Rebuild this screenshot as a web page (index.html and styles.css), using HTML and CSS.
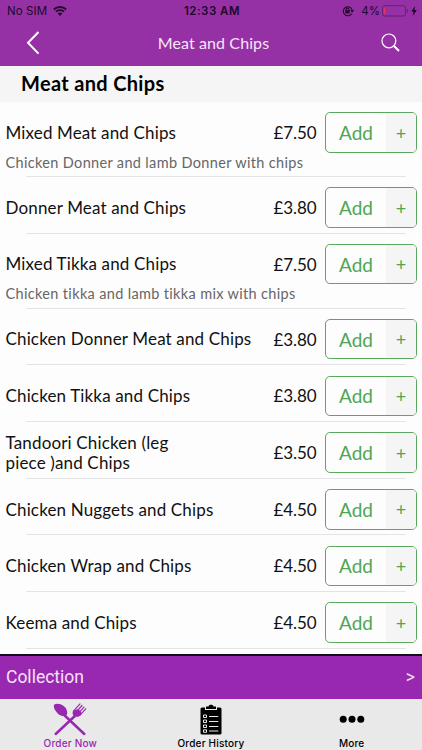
FILE: index.html
```html
<!DOCTYPE html>
<html lang="en">
<head>
  <meta charset="utf-8">
  <meta name="viewport" content="width=device-width, initial-scale=1">
  <title>Meat and Chips</title>
  <link rel="stylesheet" href="styles.css">
</head>

<body>
  <div class="app">
    <header class="header">
      <div class="status-bar">
        <div class="carrier">
          <span>No SIM</span>
          <svg class="wifi" viewBox="0 0 14 10">
            <path d="M0.8 3.5 A9 9 0 0 1 13.2 3.5" />
            <path d="M2.9 5.7 A6 6 0 0 1 11.1 5.7" />
            <path class="wifi-dot" d="M7 10 L4.7 7.6 A3.4 3.4 0 0 1 9.3 7.6 Z" />
          </svg>
        </div>
        <div class="clock">12:33 AM</div>
        <div class="battery-info">
          <svg class="lock" viewBox="0 0 12 12">
            <path d="M9.7 8.6 A4.5 4.5 0 1 1 10 4.5" />
            <path d="M4 5.4 V4.6 a1.5 1.5 0 0 1 3 0 V5.4" />
            <rect x="3.4" y="5.2" width="4.2" height="3.2" />
            <path class="lock-arrow" d="M8.3 5 H12 L10.1 7.8 Z" />
          </svg>
          <span>4%</span>
          <svg class="battery" viewBox="0 0 27 12">
            <rect x="0.6" y="0.7" width="23" height="10.3" rx="2.2" />
            <path class="battery-level" d="M2.5 2.5 V9.2" />
            <path d="M25.3 4.3 V7.4" />
          </svg>
          <svg class="bolt" viewBox="0 0 6 10">
            <path d="M4.2 0 L0.2 5.6 H2.6 L1.8 10 L5.8 4.1 H3.4 Z" />
          </svg>
        </div>
      </div>

      <div class="nav-bar">
        <svg class="back" viewBox="0 0 14 24"><path d="M12.5 1 L2 11.8 L12.5 22.6" /></svg>
        <div class="nav-title">Meat and Chips</div>
        <svg class="search" viewBox="0 0 20 20">
          <circle cx="7.9" cy="7.9" r="6.9" />
          <path d="M13 13 L18 18" />
        </svg>
      </div>
    </header>

    <h1 class="category">Meat and Chips</h1>

    <div class="menu">
      <div class="item item-tall">
        <div class="name">Mixed Meat and Chips</div>
        <div class="price">£7.50</div>
        <button class="add"><span class="add-text">Add</span><span class="plus">+</span></button>
        <p class="description">Chicken Donner and lamb Donner with chips</p>
      </div>
      <div class="item">
        <div class="name">Donner Meat and Chips</div>
        <div class="price">£3.80</div>
        <button class="add"><span class="add-text">Add</span><span class="plus">+</span></button>
      </div>
      <div class="item item-tall">
        <div class="name">Mixed Tikka and Chips</div>
        <div class="price">£7.50</div>
        <button class="add"><span class="add-text">Add</span><span class="plus">+</span></button>
        <p class="description">Chicken tikka and lamb tikka mix with chips</p>
      </div>
      <div class="item">
        <div class="name">Chicken Donner Meat and Chips</div>
        <div class="price">£3.80</div>
        <button class="add"><span class="add-text">Add</span><span class="plus">+</span></button>
      </div>
      <div class="item">
        <div class="name">Chicken Tikka and Chips</div>
        <div class="price">£3.80</div>
        <button class="add"><span class="add-text">Add</span><span class="plus">+</span></button>
      </div>
      <div class="item">
        <div class="name">Tandoori Chicken (leg<br>piece )and Chips</div>
        <div class="price">£3.50</div>
        <button class="add"><span class="add-text">Add</span><span class="plus">+</span></button>
      </div>
      <div class="item">
        <div class="name">Chicken Nuggets and Chips</div>
        <div class="price">£4.50</div>
        <button class="add"><span class="add-text">Add</span><span class="plus">+</span></button>
      </div>
      <div class="item">
        <div class="name">Chicken Wrap and Chips</div>
        <div class="price">£4.50</div>
        <button class="add"><span class="add-text">Add</span><span class="plus">+</span></button>
      </div>
      <div class="item">
        <div class="name">Keema and Chips</div>
        <div class="price">£4.50</div>
        <button class="add"><span class="add-text">Add</span><span class="plus">+</span></button>
      </div>
    </div>

    <div class="collection">
      <span>Collection</span>
      <span class="collection-arrow">&gt;</span>
    </div>

    <nav class="tabs">
      <a class="tab tab-active">
        <svg class="tab-icon" viewBox="0 0 34 34">
          <path class="handle" d="M9 10 L31.3 31" />
          <path class="handle" d="M24 11 L2.7 31" />
          <path d="M1.3 1.5 C4 -0.2 9.5 0.8 12.3 4.5 C14.6 7.6 14.8 11 13.3 12.3 C11.7 13.8 7.8 13.3 4.7 10.4 C1.5 7.4 0 3.5 1.3 1.5 Z" />
          <path d="M20 7.8 C18.9 11.2 20.3 13.6 23.2 13.8 C26 13.9 27.3 12.3 29 10.4 L25.5 6 Z" />
          <path class="prongs" d="M20.7 7.8 L27 0.9 M22.8 9.4 L29 2.5 M24.9 10.8 L31 4.1 M27 12.2 L32.8 5.8" />
        </svg>
        <span>Order Now</span>
      </a>
      <a class="tab">
        <svg class="tab-icon" viewBox="0 0 34 34">
          <path d="M8 4.5 H11 V7 H23 V4.5 H26 a1.5 1.5 0 0 1 1.5 1.5 V30 a1.5 1.5 0 0 1 -1.5 1.5 H8 a1.5 1.5 0 0 1 -1.5 -1.5 V6 A1.5 1.5 0 0 1 8 4.5 Z" />
          <path d="M12 6 V3.5 H14.5 C14.5 1 19.5 1 19.5 3.5 H22 V6 Z" />
          <path class="list" d="M15 13.5 H24.3 M15 18.5 H24.3 M15 23.5 H24.3 M15 28 H24.3" />
          <path class="checks" d="M9.5 12 h3 v2.5 h-3 z M9.5 17 h3 v2.5 h-3 z M9.5 22 h3 v2.5 h-3 z M9.5 26.8 h3 v2.5 h-3 z" />
        </svg>
        <span>Order History</span>
      </a>
      <a class="tab">
        <svg class="tab-icon" viewBox="0 0 34 34">
          <circle cx="8.2" cy="16.2" r="3.5" />
          <circle cx="17" cy="16.2" r="3.5" />
          <circle cx="25.8" cy="16.2" r="3.5" />
        </svg>
        <span>More</span>
      </a>
    </nav>
  </div>
</body>
</html>
```

FILE: styles.css
```css
* {
  box-sizing: border-box;
}

body {
  background-color: #fdfdfd;
  font-family: Lato, Arial, sans-serif;
  margin: 0;
  padding: 0;
}

svg {
  display: block;
  flex: none;
}

.app {
  display: flex;
  flex-direction: column;
  height: 750px;
  overflow: hidden;
}

.header {
  background-color: #9631a5;
  flex: none;
  height: 65.5px;
}

.status-bar {
  color: #20082a;
  display: grid;
  font-family: Inter, sans-serif;
  font-size: 11.5px;
  grid-template-columns: 1fr auto 1fr;
  height: 22px;
  line-height: 22px;
  padding: 0 5px 0 7px;
}

.carrier,
.battery-info {
  align-items: center;
  display: flex;
}

.carrier {
  gap: 6px;
  letter-spacing: 0.1px;
}

.battery-info {
  justify-content: flex-end;
}

.clock {
  font-weight: 600;
  letter-spacing: 0.5px;
}

.wifi {
  fill: none;
  height: 10px;
  stroke: #20082a;
  stroke-width: 1.8;
  width: 14px;
}

.wifi .wifi-dot {
  fill: #20082a;
  stroke: none;
}

.lock {
  fill: none;
  height: 12px;
  margin-right: 7px;
  stroke: #20082a;
  stroke-width: 1.1;
  width: 12px;
}

.lock rect,
.lock .lock-arrow {
  fill: #20082a;
  stroke: none;
}

.battery {
  fill: none;
  height: 12px;
  margin-left: 2px;
  stroke: #64206f;
  stroke-width: 1;
  width: 27px;
}

.battery .battery-level {
  stroke: #e8324f;
  stroke-width: 1.6;
}

.bolt {
  fill: #20082a;
  height: 10px;
  margin-left: 2px;
  width: 6px;
}

.nav-bar {
  align-items: center;
  display: flex;
  height: 42px;
  justify-content: space-between;
  padding: 0 21px 0 26px;
}

.nav-title {
  color: #f6e6f8;
  font-size: 16px;
  letter-spacing: 0.1px;
  padding: 0 0 2px 6px;
}

.back,
.search {
  fill: none;
  stroke: #fff;
}

.back {
  height: 24px;
  stroke-width: 2;
  width: 14px;
}

.search {
  height: 20px;
  stroke-width: 1.2;
  width: 20px;
}

.search path {
  stroke-width: 2;
}

.category {
  background-color: #f5f5f5;
  color: #000;
  flex: none;
  font-size: 20px;
  height: 36.5px;
  letter-spacing: 0.33px;
  line-height: 35px;
  margin: 0;
  padding-left: 21px;
}

.menu {
  flex: 1;
  overflow: hidden;
}

.item {
  align-content: start;
  background: linear-gradient(#e4e4e6, #e4e4e6) 26px 100% / 380px 1px no-repeat;
  color: #111;
  display: grid;
  font-size: 17px;
  grid-template-columns: 1fr auto 92px;
  grid-template-rows: 40.5px;
  height: 56.7px;
  padding: 10.3px 5px 0 5.5px;
}

.item-tall {
  height: 75px;
}

.name {
  align-self: center;
  letter-spacing: 0.15px;
  line-height: 20.5px;
  padding-top: 1px;
  white-space: nowrap;
}

.price {
  align-self: center;
  letter-spacing: -0.1px;
  margin-right: 8.5px;
}

.description {
  color: #666;
  font-size: 14.5px;
  grid-column: 1 / -1;
  letter-spacing: 0.34px;
  line-height: 20px;
  margin: 0;
}

.add {
  background-color: #fdfdfd;
  border: 1px solid #5aa85d;
  border-radius: 5px;
  color: #4da653;
  display: flex;
  font-family: inherit;
  overflow: hidden;
  padding: 0;
}

.add-text,
.plus {
  align-items: center;
  display: flex;
  height: 100%;
  justify-content: center;
}

.add-text {
  flex: 1;
  font-size: 19px;
}

.plus {
  background-color: #f5f5f6;
  font-size: 18px;
  width: 30px;
}

.collection {
  align-items: center;
  background-color: #9928b1;
  border-top: 2px solid #160b1b;
  color: #f5e2f8;
  display: flex;
  flex: none;
  font-family: Roboto, sans-serif;
  font-size: 17.5px;
  height: 45px;
  justify-content: space-between;
  padding: 0 7px 2px 6px;
}

.tabs {
  background-color: #e9e9e9;
  display: grid;
  flex: none;
  grid-template-columns: repeat(3, 1fr);
  height: 51px;
}

.tab {
  align-items: center;
  color: #000;
  display: flex;
  flex-direction: column;
  font-family: Inter, sans-serif;
  font-size: 10px;
  font-weight: 500;
  letter-spacing: 0.2px;
  line-height: 12px;
  padding-top: 4px;
}

.tab-active {
  color: #9928b1;
}

.tab-icon {
  fill: currentColor;
  height: 34px;
  width: 34px;
}

.handle,
.prongs {
  fill: none;
  stroke: currentColor;
  stroke-linecap: round;
}

.handle {
  stroke-width: 2.5;
}

.prongs {
  stroke-width: 1.2;
}

.list,
.checks {
  fill: none;
  stroke: #e9e9e9;
  stroke-width: 1;
}
```
